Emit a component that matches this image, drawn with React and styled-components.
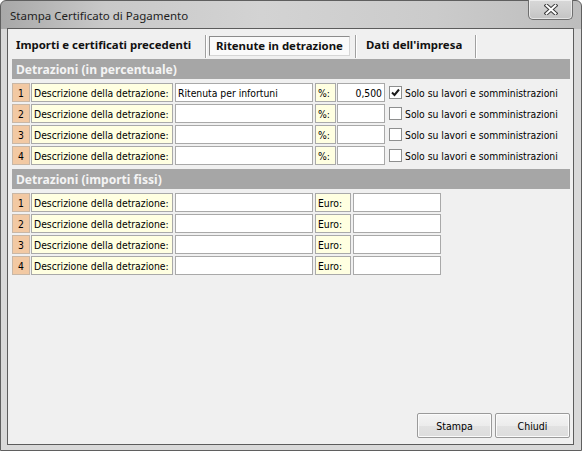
import React from "react";
import styled, { createGlobalStyle } from "styled-components";

const GlobalStyle = createGlobalStyle`
  html, body {
    margin: 0;
    padding: 0;
    background: #ffffff;
  }
  body {
    width: 582px;
    height: 451px;
    overflow: hidden;
  }
`;

const Window = styled.div`
  box-sizing: border-box;
  width: 582px;
  height: 451px;
  display: flex;
  flex-direction: column;
  padding: 0 7px 5px 6px;
  border: 1px solid #5f5f5f;
  border-radius: 6px 6px 0 0;
  background:
    linear-gradient(180deg, rgba(255, 255, 255, 0) 0, rgba(255, 255, 255, 0) 28px, #d9d9d9 28px),
    linear-gradient(90deg, #a8a8a8 0%, #c9c9c9 18%, #d3d3d3 45%, #cbcbcb 75%, #bdbdbd 100%);
`;

const TitleBar = styled.div`
  height: 28px;
  display: flex;
  align-items: flex-start;
  margin-top: -1px;
`;

const Title = styled.span`
  padding: 9px 0 0 3px;
  font-family: "Noto Sans", "Open Sans", sans-serif;
  font-size: 11.5px;
  color: #1e1e1e;
  line-height: 14px;
`;

const CloseButton = styled.div`
  box-sizing: border-box;
  margin-left: auto;
  margin-right: 1px;
  width: 45px;
  height: 20px;
  display: flex;
  align-items: center;
  justify-content: center;
  border: 1px solid #6e6e6e;
  border-top: none;
  border-radius: 0 0 5px 5px;
  background: linear-gradient(180deg, #d8d8d8 0%, #cfcfcf 50%, #c3c3c3 100%);
  box-shadow: inset 0 0 0 1px rgba(255, 255, 255, 0.55);
`;

const Client = styled.div`
  flex: 1;
  display: flex;
  flex-direction: column;
  border: 1px solid #5c5c5c;
  background: #f0f0f0;
  min-height: 0;
`;

const TabStrip = styled.div`
  height: 29px;
  display: flex;
  align-items: stretch;
  font-family: "Noto Sans", "Open Sans", sans-serif;
  font-weight: 700;
  font-size: 11.4px;
  color: #111;
  white-space: nowrap;
`;

const Tab = styled.div`
  box-sizing: border-box;
  width: ${(p) => p.$width}px;
  display: flex;
  align-items: center;
  padding: 1px 0 0 ${(p) => p.$pad}px;
  position: relative;
  &::after {
    content: "";
    position: absolute;
    right: 0;
    top: 6px;
    bottom: 0;
    width: 1px;
    background: #a0a0a0;
    box-shadow: 1px 0 0 #ffffff;
  }
`;

const ActiveTab = styled.div`
  box-sizing: border-box;
  height: 20px;
  display: flex;
  align-items: center;
  padding: 0 0 0 6px;
  width: 141px;
  margin-top: 3px;
  border: 1px solid #8c8c8c;
  border-right-color: #d6d6d6;
  border-bottom-color: #d6d6d6;
  background: #fafafa;
`;

const Panel = styled.div`
  flex: 1;
  display: flex;
  flex-direction: column;
  padding: 1px 3px 0 4px;
`;

const SectionHeader = styled.div`
  height: 20px;
  display: flex;
  align-items: center;
  padding-left: 4px;
  margin-top: ${(p) => p.$top || 0}px;
  margin-bottom: 4px;
  background: #a6a6a6;
  color: #f4f4f4;
  font-family: "Noto Sans", "Open Sans", sans-serif;
  font-weight: 700;
  font-size: 12.1px;
`;

const Rows = styled.div`
  display: flex;
  flex-direction: column;
  gap: 2px;
`;

const Row = styled.div`
  height: 19px;
  display: flex;
  align-items: stretch;
  font-family: "DejaVu Sans Condensed", "DejaVu Sans", sans-serif;
  font-size: 10.3px;
  color: #000;
`;

const Cell = styled.div`
  box-sizing: border-box;
  width: ${(p) => p.$w}px;
  margin-right: ${(p) => p.$gap ?? 2}px;
  display: flex;
  align-items: center;
  padding: 0 2px;
  border: 1px solid #a9a9a9;
  background: #ffffe1;
  white-space: nowrap;
  overflow: hidden;
`;

const NumCell = styled(Cell)`
  background: #f2c9a3;
  border-color: #c8b7a6;
  justify-content: center;
`;

const Field = styled.div`
  box-sizing: border-box;
  width: ${(p) => p.$w}px;
  margin-right: ${(p) => p.$gap ?? 2}px;
  display: flex;
  align-items: center;
  justify-content: ${(p) => (p.$right ? "flex-end" : "flex-start")};
  padding: 0 2px;
  border: 1px solid #a9a9a9;
  background: #ffffff;
  white-space: nowrap;
`;

const CheckWrap = styled.div`
  display: flex;
  align-items: center;
  gap: 3px;
  margin-left: 2px;
  white-space: nowrap;
`;

const CheckBox = styled.div`
  box-sizing: border-box;
  width: 13px;
  height: 13px;
  border: 1px solid #8e8f8f;
  background: #ffffff;
  display: flex;
  align-items: center;
  justify-content: center;
`;

const Spacer = styled.div`
  flex: 1;
`;

const Footer = styled.div`
  display: flex;
  justify-content: flex-end;
  gap: 3px;
  padding: 0 0 6px 0;
`;

const Button = styled.button`
  box-sizing: border-box;
  width: 75px;
  height: 25px;
  border: 1px solid #9a9a9a;
  border-radius: 2px;
  background: linear-gradient(180deg, #f4f4f4 0%, #ececec 50%, #e2e2e2 51%, #dcdcdc 100%);
  box-shadow: inset 0 0 0 1px #fbfbfb;
  font-family: "DejaVu Sans Condensed", "DejaVu Sans", sans-serif;
  font-size: 10.5px;
  color: #000;
  padding: 0;
`;

const percentRows = [
  { n: 1, desc: "Ritenuta per infortuni", value: "0,500", checked: true },
  { n: 2, desc: "", value: "", checked: false },
  { n: 3, desc: "", value: "", checked: false },
  { n: 4, desc: "", value: "", checked: false },
];

const fixedRows = [1, 2, 3, 4];

const CloseIcon = () => (
  <svg width="14" height="11" viewBox="0 0 14 11">
    <path d="M2.5 1.5 L11.5 9.5 M11.5 1.5 L2.5 9.5" stroke="#3c3c3c" strokeWidth="4" strokeLinecap="square" />
    <path d="M2.5 1.5 L11.5 9.5 M11.5 1.5 L2.5 9.5" stroke="#ffffff" strokeWidth="2" strokeLinecap="square" />
  </svg>
);

const CheckMark = () => (
  <svg width="9" height="9" viewBox="0 0 9 9">
    <path d="M1 4.5 L3.5 7 L8 1.5" fill="none" stroke="#1b1b1b" strokeWidth="2" />
  </svg>
);

const App = () => {
  return (
    <>
      <GlobalStyle />
      <Window>
        <TitleBar>
          <Title>Stampa Certificato di Pagamento</Title>
          <CloseButton>
            <CloseIcon />
          </CloseButton>
        </TitleBar>
        <Client>
          <TabStrip>
            <Tab $width={198} $pad={8}>Importi e certificati precedenti</Tab>
            <Tab $width={150} $pad={3}>
              <ActiveTab>Ritenute in detrazione</ActiveTab>
            </Tab>
            <Tab $width={120} $pad={10}>Dati dell'impresa</Tab>
          </TabStrip>
          <Panel>
            <SectionHeader>Detrazioni (in percentuale)</SectionHeader>
            <Rows>
              {percentRows.map((r) => (
                <Row key={r.n}>
                  <NumCell $w={18} $gap={1}>{r.n}</NumCell>
                  <Cell $w={142}>Descrizione della detrazione:</Cell>
                  <Field $w={138}>{r.desc}</Field>
                  <Cell $w={21} $gap={1}>%:</Cell>
                  <Field $w={48} $right>{r.value}</Field>
                  <CheckWrap>
                    <CheckBox>{r.checked && <CheckMark />}</CheckBox>
                    <span>Solo su lavori e somministrazioni</span>
                  </CheckWrap>
                </Row>
              ))}
            </Rows>
            <SectionHeader $top={4}>Detrazioni (importi fissi)</SectionHeader>
            <Rows>
              {fixedRows.map((n) => (
                <Row key={n}>
                  <NumCell $w={18} $gap={1}>{n}</NumCell>
                  <Cell $w={142}>Descrizione della detrazione:</Cell>
                  <Field $w={138}></Field>
                  <Cell $w={36}>Euro:</Cell>
                  <Field $w={88}></Field>
                </Row>
              ))}
            </Rows>
            <Spacer />
            <Footer>
              <Button>Stampa</Button>
              <Button>Chiudi</Button>
            </Footer>
          </Panel>
        </Client>
      </Window>
    </>
  );
};

export default App;
